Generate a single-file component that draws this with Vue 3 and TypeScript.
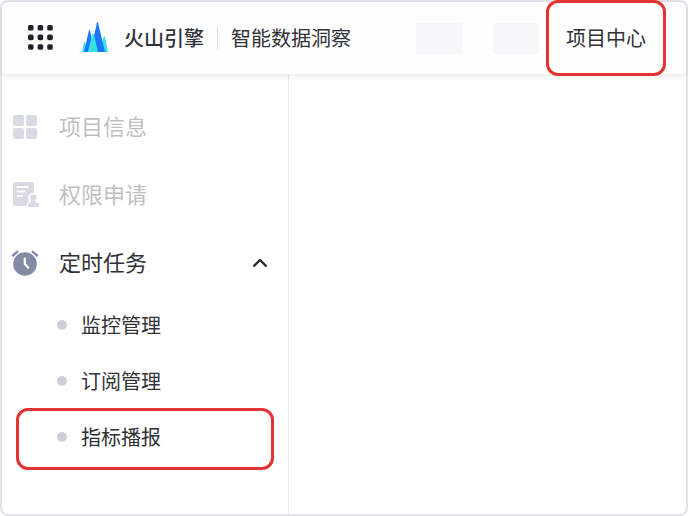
<script setup lang="ts">
import { ref } from 'vue'

interface SubItem {
  label: string
  marked: boolean
}

const open = ref(true)
const subItems: SubItem[] = [
  { label: '监控管理', marked: false },
  { label: '订阅管理', marked: false },
  { label: '指标播报', marked: true },
]
const dots = [0, 1, 2].flatMap((row) => [0, 1, 2].map((col) => ({ x: col * 9.6, y: row * 9.6 })))
</script>

<template>
  <div class="frame">
    <header class="topbar">
      <button class="apps" type="button" aria-label="应用">
        <svg width="26" height="26" viewBox="0 0 26 26" fill="#1f2229">
          <rect v-for="(d, i) in dots" :key="i" :x="d.x" :y="d.y" width="5.6" height="5.6" rx="1.7" />
        </svg>
      </button>
      <a class="brand" href="#">
        <svg width="26" height="32" viewBox="0 0 26 32">
          <path d="M0 30 2.2 20q.4-1 .8 0L6 30z" fill="#37e1e0" />
          <path d="M17 30 21.8 14.600q.5-1.200 1 0L26 30z" fill="#37e1e0" />
          <path d="M2 30 6.900 8.500q.5-1.400 1 0L13 30z" fill="#1a75ff" />
          <path d="M8.500 30 15 .4q.5-1.200 1 0L23 30z" fill="#1a75ff" />
          <path d="M5.800 30 10.300 12.300q.8-1.500 1.600 0L16 30z" fill="#37e1e0" />
        </svg>
        <span class="brand-name">火山引擎</span>
      </a>
      <span class="rule"></span>
      <span class="product">智能数据洞察</span>
      <nav class="nav">
        <span class="placeholder"></span>
        <span class="placeholder"></span>
        <a class="nav-link" href="#">项目中心</a>
      </nav>
    </header>

    <div class="body">
      <aside class="sidebar">
        <a class="item muted" href="#">
          <svg class="icon" width="28" height="28" viewBox="0 0 28 28" fill="#d8dbe4">
            <rect x="2" y="2" width="11" height="11" rx="2" />
            <rect x="15" y="2" width="11" height="11" rx="2" />
            <rect x="2" y="15" width="11" height="11" rx="2" />
            <rect x="15" y="15" width="11" height="11" rx="2" />
          </svg>
          <span class="label">项目信息</span>
        </a>
        <a class="item muted" href="#">
          <svg class="icon" width="28" height="28" viewBox="0 0 28 28">
            <path
              d="M4.5 1H20.5A2.5 2.5 0 0 1 23 3.5V11.8A5 5 0 0 0 17.4 18.5L18 20.3Q15.5 21.5 15.5 25H4.5A2.5 2.5 0 0 1 2 22.5V3.5A2.5 2.5 0 0 1 4.5 1z"
              fill="#d8dbe4"
            />
            <path d="M6.5 6H17M6.5 10.5H14M6.5 15H11" stroke="#fff" stroke-width="1.9" stroke-linecap="round" />
            <path
              d="M22.3 13.5a3.3 3.3 0 0 1 3.3 3.3c0 1.300-1.300 2-1.300 3.200 0 1 .8 1.600 2 1.900 1.200.3 1.700.9 1.700 1.900V26H16.800v-2.200c0-1 .5-1.600 1.600-1.900 1.200-.3 1.900-.9 1.900-1.900 0-1.200-1.300-1.900-1.300-3.200a3.300 3.300 0 0 1 3.300-3.300z"
              fill="#d8dbe4"
            />
          </svg>
          <span class="label">权限申请</span>
        </a>
        <button class="item" type="button" :aria-expanded="open" @click="open = !open">
          <svg class="icon" width="28" height="28" viewBox="0 0 28 28" fill="none">
            <circle cx="14" cy="15" r="11.800" fill="#838ba5" />
            <path d="M2 6.500 6.200 2.800M21.800 2.800 26 6.500" stroke="#838ba5" stroke-width="2.400" stroke-linecap="round" />
            <path
              d="M13.800 9.500V15L17.300 18.700"
              stroke="#fff"
              stroke-width="2.200"
              stroke-linecap="round"
              stroke-linejoin="round"
            />
          </svg>
          <span class="label">定时任务</span>
          <svg class="chevron" :class="{ closed: !open }" width="16" height="10" viewBox="0 0 16 10" fill="none">
            <path d="M1.500 8.500 8 2 14.500 8.500" stroke="#25272c" stroke-width="2.400" stroke-linejoin="round" />
          </svg>
        </button>
        <ul v-if="open" class="sub">
          <li v-for="s in subItems" :key="s.label">
            <a class="sub-item" :class="{ marked: s.marked }" href="#">
              <span class="bullet"></span>
              <span>{{ s.label }}</span>
            </a>
          </li>
        </ul>
      </aside>
      <main class="content"></main>
    </div>
  </div>
</template>

<style>
body {
  background: #fff;
}
</style>

<style scoped>
.frame {
  box-sizing: border-box;
  min-height: 100vh;
  display: flex;
  flex-direction: column;
  border: 2px solid #e3e3e9;
  border-radius: 8px;
  background: #fff;
  color: #303237;
  font-family: 'Noto Sans CJK SC', sans-serif;
  font-size: 20px;
  line-height: 30px;
}
a {
  color: inherit;
  text-decoration: none;
}
button {
  border: 0;
  padding: 0;
  background: none;
  color: inherit;
  font: inherit;
  cursor: pointer;
}
svg {
  display: block;
  flex: none;
}
.topbar {
  position: relative;
  z-index: 1;
  display: flex;
  align-items: center;
  height: 72px;
  padding: 0 20px 0 26px;
  border-radius: 6px 6px 0 0;
  background: #fdfdfe;
  box-shadow: 0 2px 6px rgba(0, 0, 0, 0.09);
  white-space: nowrap;
}
.brand {
  display: flex;
  align-items: center;
  gap: 16px;
  margin-left: 28px;
}
.brand-name {
  font-weight: 500;
}
.rule {
  width: 1px;
  height: 22px;
  margin: 0 13px;
  background: #dfe2e9;
}
.nav {
  display: flex;
  align-items: center;
  margin-left: auto;
}
.placeholder {
  width: 46px;
  height: 31px;
  margin-right: 31px;
  background: #f6f7f9;
}
.placeholder + .placeholder {
  margin-right: 7px;
}
.nav-link {
  box-sizing: border-box;
  display: flex;
  align-items: center;
  justify-content: center;
  width: 120px;
  height: 76px;
  border: 3px solid #e43333;
  border-radius: 12px;
}
.body {
  flex: 1;
  display: flex;
}
.sidebar {
  box-sizing: border-box;
  width: 287px;
  padding-top: 19px;
  border-right: 1px solid #ebebee;
}
.content {
  flex: 1;
}
.item {
  box-sizing: border-box;
  display: flex;
  align-items: center;
  gap: 20px;
  width: 100%;
  height: 68px;
  padding: 0 20px 0 9px;
  font-size: 22px;
}
.label {
  padding-bottom: 4px;
}
.muted {
  color: #bfbfc1;
}
.chevron {
  margin-left: auto;
}
.closed {
  transform: rotate(180deg);
}
.sub {
  margin: 0;
  padding: 0;
  list-style: none;
}
.sub-item {
  position: relative;
  display: flex;
  align-items: center;
  gap: 14px;
  height: 56px;
  padding-left: 55px;
}
.bullet {
  width: 10px;
  height: 10px;
  border-radius: 50%;
  background: #cdd0d5;
}
.marked::after {
  content: '';
  position: absolute;
  inset: -1px 14px -5px;
  border: 3px solid #e43333;
  border-radius: 12px;
}
</style>
